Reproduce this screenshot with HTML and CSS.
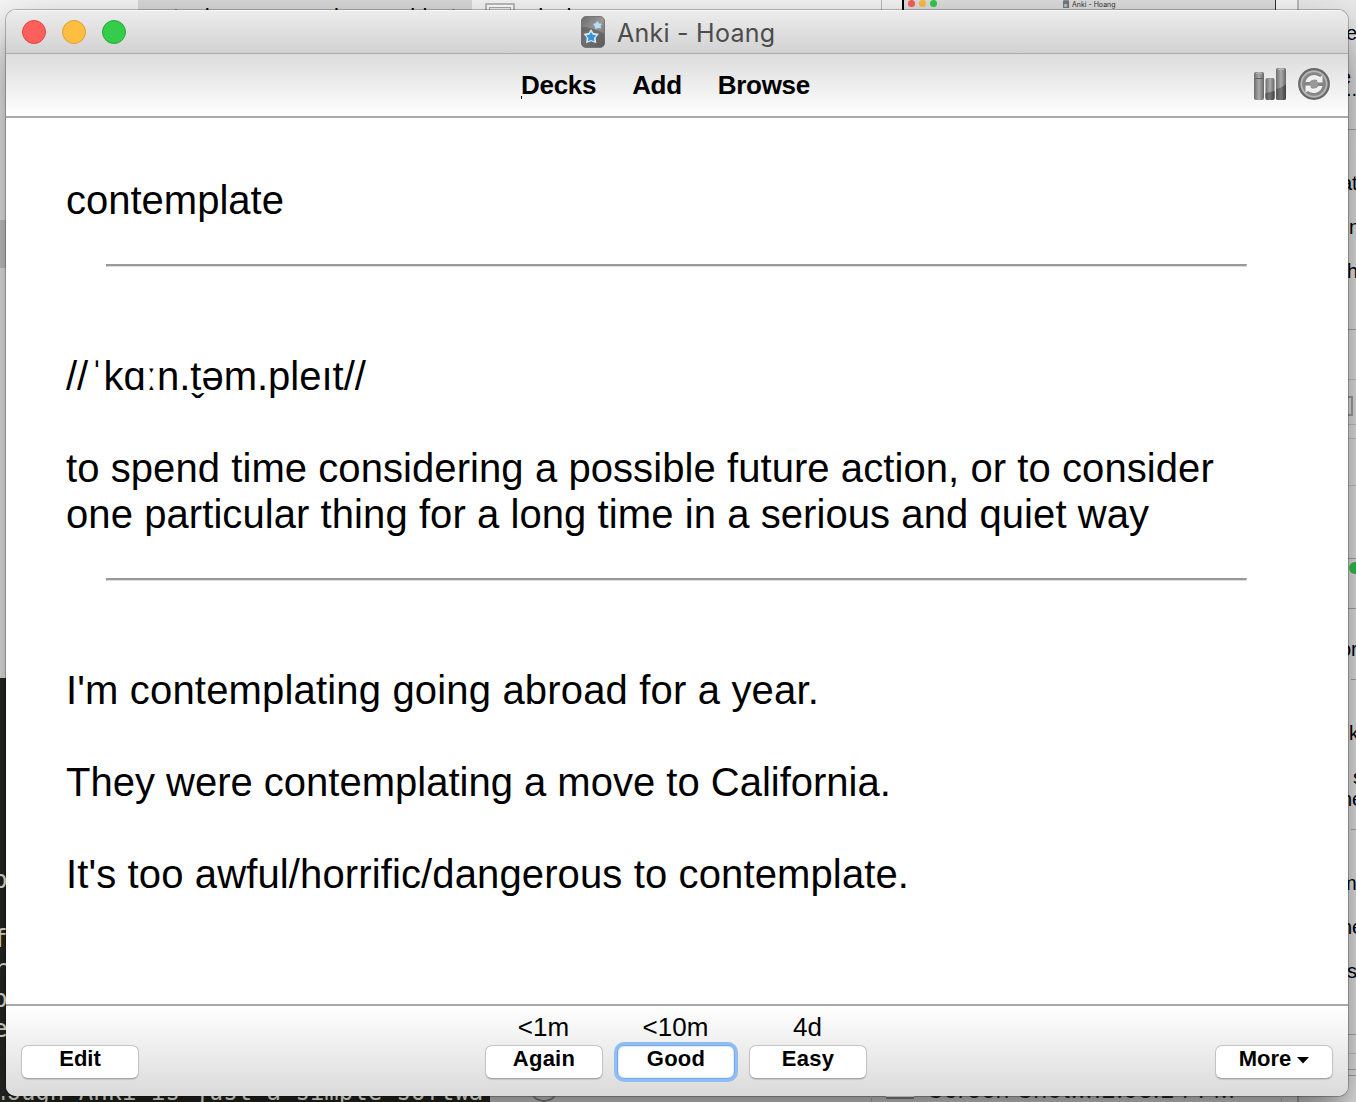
FILE: index.html
```html
<!DOCTYPE html>
<html lang="en">
<head>
<meta charset="utf-8">
<title>Anki - Hoang</title>
<link rel="stylesheet" href="styles.css">
</head>
<body>
<div class="desktop">
  <div class="backdrop" aria-hidden="true">
    <div class="bg-selection"></div>
    <span class="bg-text" style="left:173px;top:4px">to dev</span>
    <span class="bg-text" style="left:334px;top:4px">in</span>
    <span class="bg-text" style="left:387px;top:4px">subject</span>
    <span class="bg-text" style="left:531px;top:4px">decks</span>
    <div class="bg-thumb"></div>
    <div class="bg-rule" style="left:881px;top:0;height:10px"></div>
    <div class="bg-mini">
      <i class="mini-dot red"></i><i class="mini-dot yellow"></i><i class="mini-dot green"></i>
      <svg class="mini-icon" viewBox="0 0 8 10"><rect width="7" height="9" rx="1" fill="#777"/><circle cx="3" cy="6" r="2" fill="#9cc8e8"/></svg>
      <span class="mini-title">Anki - Hoang</span>
    </div>
    <div class="bg-panel"></div>
    <div class="bg-block"></div>
    <div class="bg-terminal"></div>
    <div class="bg-line" style="top:129px"></div>
    <div class="bg-line" style="top:329px"></div>
    <div class="bg-line faint" style="top:379px"></div>
    <div class="bg-box"></div>
    <div class="bg-line faint" style="top:424px"></div>
    <div class="bg-line faint" style="top:438px"></div>
    <div class="bg-line faint" style="top:485px"></div>
    <div class="bg-line" style="top:558px"></div>
    <div class="bg-line" style="top:608px"></div>
    <div class="bg-line short" style="top:679px"></div>
    <div class="bg-line short" style="top:829px"></div>
    <div class="bg-line" style="top:1034px"></div>
    <div class="bg-line faint" style="top:1053px"></div>
    <div class="bg-line" style="top:1069px"></div>
    <div class="bg-line" style="top:1075px"></div>
  </div>

  <main class="window">
    <header class="titlebar">
      <div class="lights"><i class="light red"></i><i class="light yellow"></i><i class="light green"></i></div>
      <div class="title">
        <svg class="app-icon" viewBox="0 0 26 34">
          <defs>
            <linearGradient id="ig" x1="0" y1="0" x2="1" y2="1"><stop offset="0" stop-color="#6a6a6a"/><stop offset=".5" stop-color="#999"/><stop offset="1" stop-color="#606060"/></linearGradient>
            <filter id="soft"><feGaussianBlur stdDeviation=".7"/></filter>
          </defs>
          <rect x="1.500" y="1.500" width="23" height="31" rx="4.500" fill="url(#ig)" stroke="#777"/>
          <path d="M1.500 12 Q14 12 24.500 19 V28 Q24.500 32 21 32 H5 Q1.500 32 1.500 28Z" fill="#595959" opacity=".65"/>
          <g filter="url(#soft)">
            <path d="M17.500 6l1.500 2.500 3 .3-1.500 2.200.8 2.300-3.300-.2-2.800 1-.2-2.500-2-2.500 3-1Z" fill="#b9def5"/>
            <path d="M11 14l2.500 4 5.500.7-3.300 4 .6 5.600-5.300-2-5 2 .7-5.500-3.200-4.100 5-.7Z" fill="#d3e9f7"/>
            <path d="M11 17l1.800 2.700 3.500.8-2.500 2.500.6 3.300-3.400-1.400-3.100 1.400.5-3.300-2.300-2.500 3.300-.8Z" fill="#3295dc"/>
          </g>
        </svg>
        <span>Anki - Hoang</span>
      </div>
    </header>

    <nav class="toolbar">
      <div class="links"><a class="link current">Decks</a><a class="link">Add</a><a class="link">Browse</a></div>
      <div class="tools">
        <svg class="tool" viewBox="0 0 32 32">
          <defs>
            <linearGradient id="bar"><stop offset="0" stop-color="#6d6d6d"/><stop offset=".5" stop-color="#ababab"/><stop offset="1" stop-color="#666"/></linearGradient>
            <linearGradient id="barlow"><stop offset="0" stop-color="#555"/><stop offset=".5" stop-color="#777"/><stop offset="1" stop-color="#3e3e3e"/></linearGradient>
          </defs>
          <rect x="0" y="4" width="10" height="28" rx="2" fill="url(#bar)"/>
          <path d="M.5 10.500H9.500" stroke="#666"/><path d="M2 5.500Q5 4 8 5.500" stroke="#bbb" fill="none"/>
          <rect x="11.500" y="10" width="9" height="22" rx="2" fill="url(#bar)"/>
          <path d="M11.500 25L20.500 23V30Q20.500 32 18.500 32H13.500Q11.500 32 11.500 30Z" fill="url(#barlow)"/>
          <rect x="22" y="0" width="10" height="32" rx="2" fill="url(#bar)"/>
          <path d="M22 21Q28 20 32 16V30Q32 32 30 32H24Q22 32 22 30Z" fill="url(#barlow)"/>
          <path d="M24 1.500Q27 .5 30 1.500" stroke="#c4c4c4" fill="none"/>
        </svg>
        <svg class="tool" viewBox="0 0 32 32">
          <circle cx="16" cy="16" r="14.800" fill="#939393" stroke="#696969" stroke-width="2.200"/>
          <circle cx="16" cy="16" r="12.700" fill="none" stroke="#b8b8b8" stroke-width="1.500"/>
          <circle cx="16" cy="16" r="11.300" fill="#858585"/>
          <path d="M7.500 14A9 8.500 0 0 1 22 9L24.500 7.500V14.500H17L19.500 12.300Q15 10 11.500 14Z" fill="#f0f0f0"/>
          <path d="M24.500 18A9 8.500 0 0 1 10 23L7.500 24.500V17.500H15L12.500 19.700Q17 22 20.500 18Z" fill="#f0f0f0"/>
          <circle cx="16" cy="16" r="4" fill="#999"/>
        </svg>
      </div>
    </nav>

    <section class="card">
      <p>contemplate</p>
      <hr>
      <p class="after-rule phonetic"><span class="lead">//</span>ˈkɑːn.t̬əm.pleıt//</p>
      <p class="gap definition">to spend time considering a possible future action, or to consider<br>one particular thing for a long time in a serious and quiet way</p>
      <hr>
      <p class="after-rule example-a">I'm contemplating going abroad for a year.</p>
      <p class="gap">They were contemplating a move to California.</p>
      <p class="gap example-c">It's too awful/horrific/dangerous to contemplate.</p>
    </section>

    <footer class="answers">
      <div class="side"><button class="btn">Edit</button></div>
      <div class="choices">
        <div class="choice"><span>&lt;1m</span><button class="btn">Again</button></div>
        <div class="choice"><span>&lt;10m</span><button class="btn focused">Good</button></div>
        <div class="choice"><span>4d</span><button class="btn">Easy</button></div>
      </div>
      <div class="side right"><button class="btn">More<svg class="caret" viewBox="0 0 12 7"><path d="M0 0H12L6 6.500Z"/></svg></button></div>
    </footer>
  </main>

  <div class="edge right-edge" aria-hidden="true">
    <span style="left:-2px;top:22px">e</span>
    <span style="left:-8px;top:66px">e</span>
    <span style="left:-2px;top:78px">..</span>
    <span style="left:-7px;top:172px">at</span>
    <span style="left:1px;top:216px">n</span>
    <span style="left:-1px;top:260px">h</span>
    <i class="edge-dot"></i>
    <span style="left:-8px;top:638px">or</span>
    <span style="left:1px;top:722px">k</span>
    <span style="left:5px;top:766px">s</span>
    <span style="left:-7px;top:788px">ne</span>
    <span style="left:-8px;top:872px">m</span>
    <span style="left:-7px;top:916px">ne</span>
    <span style="left:-1px;top:960px">s</span>
  </div>
  <div class="edge left-edge" aria-hidden="true">
    <span style="top:865px">p</span><span style="top:924px">f</span><span style="top:954px">r</span><span style="top:984px">p</span><span style="top:1014px">e</span>
  </div>
  <div class="edge bottom-edge" aria-hidden="true">
    <span class="term-line">nough Anki is just a simple softwar</span>
    <i class="ring"></i>
    <i class="file"></i>
    <span class="file-name">Screen Shot...12.53.24 PM</span>
    <i class="split" style="left:871px"></i>
    <i class="split" style="left:1281px"></i>
  </div>
</div>
</body>
</html>
```
FILE: styles.css
```css
* { box-sizing: border-box; }
body { margin: 0; font-family: "Liberation Sans", Arial, sans-serif; color: #000; }
.desktop { position: relative; width: 1356px; height: 1102px; overflow: hidden; background: #f6f6f6; padding: 10px 8px 6px 6px; }

/* windows that sit behind the main one */
.backdrop > * { position: absolute; }
.bg-selection { left: 138px; top: 0; width: 334px; height: 12px; background: #dadada; }
.bg-text { font-size: 22px; line-height: 25px; white-space: nowrap; }
.bg-thumb { left: 485px; top: 3px; width: 30px; height: 12px; border: 2px solid #bbb; background: #eee; box-shadow: inset 0 0 0 2px #fff, inset 0 0 0 3px #aaa; }
.bg-rule { width: 1px; background: #bbb; }
.bg-mini { left: 902px; top: 0; width: 374px; height: 12px; background: #dedede; border-left: 2px solid #000; border-right: 1px solid #333; }
.mini-dot { position: absolute; top: 0; width: 7px; height: 7px; border-radius: 50%; }
.mini-dot.red { left: 4px; background: #fa5d58; }
.mini-dot.yellow { left: 15px; background: #fbbc3f; }
.mini-dot.green { left: 26px; background: #35c84a; }
.mini-icon { position: absolute; left: 159px; top: 0; width: 7px; height: 9px; }
.mini-title { position: absolute; left: 168px; top: 0; font: 7px/9px Inter, sans-serif; color: #333; white-space: nowrap; }
.bg-panel { left: 1297px; top: 0; width: 59px; height: 1102px; border-left: 2px solid #bbb; background: linear-gradient(#eaeaea, #f0f0f0 300px); }
.bg-block { left: 0; top: 220px; width: 8px; height: 48px; background: #d4d4d4; }
.bg-terminal { left: 0; top: 678px; width: 490px; height: 424px; background: #292a24; }
.bg-line { left: 1340px; width: 16px; height: 1px; background: #b0b0b0; }
.bg-line.faint { background: #d0d0d0; }
.bg-line.short { left: 1351px; width: 5px; }
.bg-box { left: 1340px; top: 396px; width: 13px; height: 20px; border: 2px solid #aaa; }

.window { position: relative; height: 1086px; display: flex; flex-direction: column; border-radius: 10px; overflow: hidden; background: #fff; box-shadow: 0 0 0 1px rgba(0,0,0,.24), 0 24px 48px rgba(0,0,0,.54); }
.titlebar { height: 44px; flex: none; display: grid; grid-template-columns: 1fr auto 1fr; align-items: center; background: linear-gradient(#ededed, #d2d2d2); border-bottom: 1px solid #acacac; box-shadow: inset 0 1px #f7f7f7; }
.lights { display: flex; gap: 16px; padding-left: 16px; }
.light { width: 24px; height: 24px; border-radius: 50%; border: 1px solid; }
.light.red { background: #fd605b; border-color: #e4453f; }
.light.yellow { background: #fdbe41; border-color: #df9f32; }
.light.green { background: #35cb4b; border-color: #26ab34; }
.title { display: flex; align-items: center; gap: 11px; font: 25px/30px Inter, sans-serif; letter-spacing: .25px; color: #4c4c4c; padding-top: 2px; }
.title span { width: 157px; white-space: nowrap; }
.app-icon { width: 26px; height: 34px; margin-top: -2px; }

.toolbar { height: 64px; flex: none; display: flex; justify-content: space-between; padding: 0 18px 0 515px; background: linear-gradient(#dcdcdc, #fff); border-bottom: 2px solid #a9a9a9; }
.links { display: flex; gap: 36px; padding-top: 16px; font: bold 26px/30px "Liberation Sans", Arial, sans-serif; letter-spacing: -.3px; }
.current { position: relative; }
.current::before { content: ""; position: absolute; left: 0; top: 26px; width: 1px; height: 3px; background: #000; }
.tools { display: flex; gap: 12px; padding-top: 14px; }
.tool { width: 32px; height: 32px; }

.card { flex: 1; padding: 59px 60px 0; font-size: 40px; line-height: 46px; }
.card p { margin: 0; white-space: nowrap; }
.card hr { margin: 41px 41px 40px 40px; height: 3px; border: 1px solid #dedede; border-top: 2px solid #999; border-left-color: #999; }
.card .after-rule { padding-top: 46px; }
.card .gap { padding-top: 46px; }
.lead { margin-right: 2px; }
.definition { letter-spacing: .075px; }
.example-a { letter-spacing: .17px; }
.example-c { letter-spacing: .125px; }

.answers { height: 92px; flex: none; display: grid; grid-template-columns: 1fr auto 1fr; align-items: end; padding: 0 15px 17px; border-top: 2px solid #a9a9a9; background: linear-gradient(#fff, #dadada); }
.choices { display: flex; gap: 14px; margin-right: 2px; }
.choice { display: flex; flex-direction: column; align-items: center; font-size: 26px; line-height: 30px; gap: 3px; }
.choice span { margin-right: 1px; }
.btn { display: flex; justify-content: center; width: 118px; height: 34px; padding: 0; border: 1px solid #c4c4c4; border-bottom-color: #a4a4a4; border-radius: 7px; background: #fff; box-shadow: 0 1px 1px rgba(0,0,0,.12); color: #000; font: bold 22px/26px "Liberation Sans", Arial, sans-serif; }
.choice .btn { letter-spacing: .25px; }
.btn.focused { border-color: #78a9e4; box-shadow: 0 0 0 3px #90bdf2, inset 0 0 2px #90bdf2; }
.side.right { display: flex; justify-content: flex-end; }
.caret { width: 12px; height: 7px; margin: 11px 0 0 6px; }

/* slivers of other windows' text beside the main window */
.edge { position: absolute; overflow: hidden; }
.edge > * { position: absolute; white-space: nowrap; }
.right-edge { left: 1348px; top: 0; width: 8px; height: 1095px; font-size: 20px; line-height: 22px; }
.edge-dot { left: 1px; top: 562px; width: 12px; height: 12px; border-radius: 50%; background: #29a03b; }
.left-edge { left: 0; top: 680px; width: 6px; height: 400px; font: 24px/30px "DejaVu Sans Mono", monospace; color: #bfc0ba; }
.left-edge span { left: -7px; margin-top: -680px; }
.bottom-edge { left: 0; top: 1096px; width: 1356px; height: 6px; }
.term-line { left: -8px; top: -19px; width: 495px; overflow: hidden; font: 24px/30px "DejaVu Sans Mono", monospace; color: #aaaba5; }
.ring { left: 529px; top: -24px; width: 30px; height: 30px; border: 2px solid #555; border-radius: 50%; }
.file { left: 886px; top: -4px; width: 28px; height: 7px; background: #aaa; border-bottom: 2px solid #555; }
.file-name { left: 928px; top: -19px; font: 23.500px/26px Inter, sans-serif; letter-spacing: .65px; color: #161616; }
.split { top: 0; width: 1px; height: 6px; background: #777; }
```
